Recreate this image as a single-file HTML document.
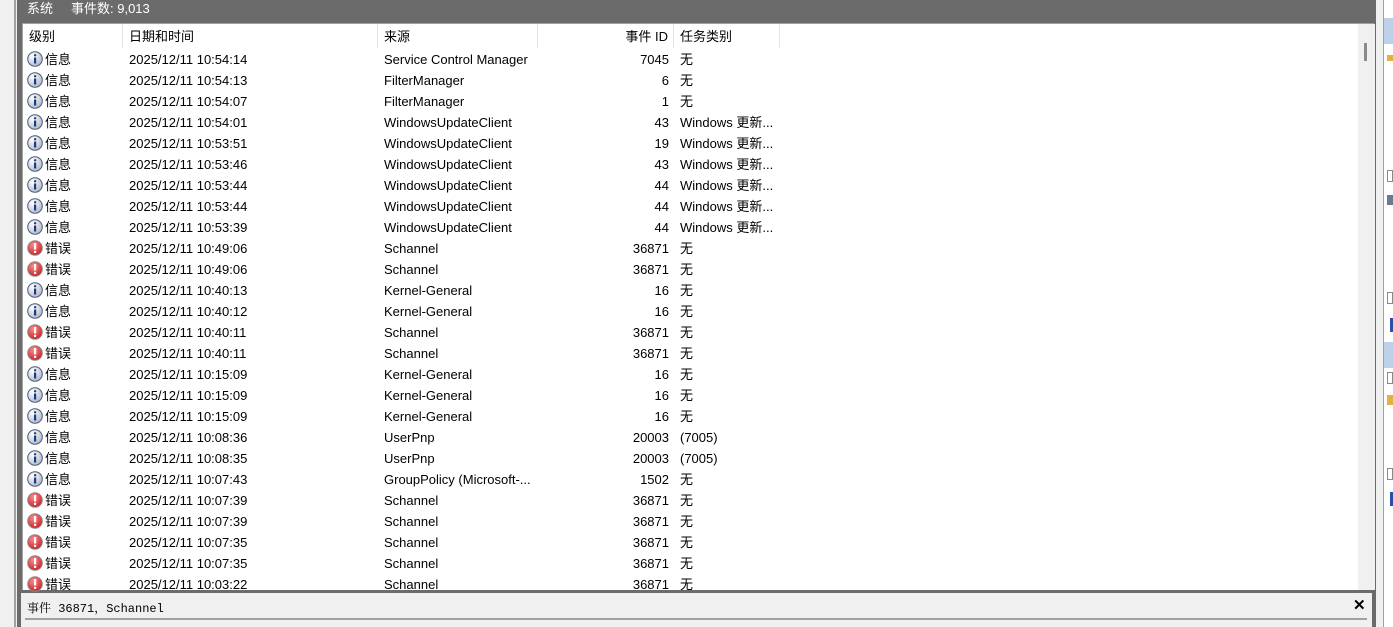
<!DOCTYPE html>
<html><head><meta charset="utf-8"><style>
*{margin:0;padding:0;box-sizing:border-box}
body{width:1393px;height:627px;overflow:hidden;background:#f0f0f0;position:relative;font-family:"Liberation Sans","Noto Sans CJK SC",sans-serif;font-size:13px;color:#000}
.abs{position:absolute}
#top{left:17px;top:0;width:1359px;height:18px;background:#6b6b6b;color:#fff;font-size:13px;line-height:17px}
#frame{left:17px;top:18px;width:1359px;height:575px;background:#6b6b6b}
#list{left:22px;top:23px;width:1352px;height:567px;background:#fff;border-left:1px solid #a0a0a0;border-top:1px solid #a0a0a0}
.hd{position:absolute;top:0;height:24px;line-height:25px;border-right:1px solid #e5e5e5;padding-left:6px}
.row{position:absolute;left:0;height:21px;line-height:22px;width:1336px}
.row span{position:absolute;top:0;white-space:nowrap}
.ic{position:absolute;left:4px;top:2px;width:16px;height:16px}
#sb{left:1358px;top:24px;width:17px;height:566px;background:#f0f0f0}
#det{left:17px;top:593px;width:1359px;height:34px;background:#f0f0f0;border-left:4px solid #6b6b6b;border-right:4px solid #6b6b6b}
#rp{left:1383px;top:0;width:10px;height:627px;background:#fff;border-left:1px solid #a0a0a0}
</style></head><body>
<div class="abs" style="left:0;top:0;width:15px;height:627px;background:#f0f0f0"></div>
<div class="abs" style="left:14px;top:0;width:2px;height:627px;background:#a0a0a0"></div>
<div class="abs" id="top"><span style="position:absolute;left:10px;top:0">系统</span><span style="position:absolute;left:54px;top:0">事件数: 9,013</span></div>
<div class="abs" id="frame"></div>
<div class="abs" id="list">
<div class="hd" style="left:0;width:100px">级别</div>
<div class="hd" style="left:100px;width:255px">日期和时间</div>
<div class="hd" style="left:355px;width:160px">来源</div>
<div class="hd" style="left:515px;width:136px;text-align:right;padding-right:5px">事件 ID</div>
<div class="hd" style="left:651px;width:106px">任务类别</div>
<div id="rows"></div>
</div>
<div class="abs" id="sb"><div class="abs" style="left:6px;top:19px;width:3px;height:18px;background:#8a8a8a"></div></div>
<div class="abs" id="det"><span style="position:absolute;left:6px;top:6px;font-family:'Liberation Mono','Noto Serif CJK SC',monospace;font-size:12px">事件 36871，Schannel</span><span style="position:absolute;left:1332px;top:3px;font-size:15px;font-weight:bold">✕</span><div class="abs" style="left:4px;top:25px;width:1342px;height:2px;background:#a0a0a0"></div></div>
<div class="abs" id="rp">
<div class="abs" style="left:0;top:18px;width:10px;height:26px;background:#bcd0e8"></div>
<div class="abs" style="left:3px;top:55px;width:6px;height:6px;background:#e0b040"></div>
<div class="abs" style="left:3px;top:170px;width:6px;height:12px;border:1px solid #888"></div>
<div class="abs" style="left:3px;top:195px;width:6px;height:10px;background:#6a7a90"></div>
<div class="abs" style="left:3px;top:292px;width:6px;height:12px;border:1px solid #888"></div>
<div class="abs" style="left:0;top:342px;width:10px;height:26px;background:#bcd0e8"></div>
<div class="abs" style="left:6px;top:318px;width:4px;height:14px;background:#2b4fa8"></div>
<div class="abs" style="left:3px;top:372px;width:6px;height:12px;border:1px solid #888"></div>
<div class="abs" style="left:3px;top:395px;width:6px;height:10px;background:#e0b040"></div>
<div class="abs" style="left:3px;top:468px;width:6px;height:12px;border:1px solid #888"></div>
<div class="abs" style="left:6px;top:492px;width:4px;height:14px;background:#2b4fa8"></div>
</div>
<script>
var I='<svg class="ic" viewBox="0 0 16 16"><defs><radialGradient id="gi" cx=".35" cy=".3" r=".8"><stop offset="0" stop-color="#fff"/><stop offset="1" stop-color="#aab4c4"/></radialGradient></defs><circle cx="8" cy="8" r="7.3" fill="url(#gi)" stroke="#4a5a78"/><rect x="7" y="6.5" width="2.2" height="6" fill="#1d3a8a"/><circle cx="8.1" cy="4.3" r="1.2" fill="#1d3a8a"/></svg>';
var E='<svg class="ic" viewBox="0 0 16 16"><defs><radialGradient id="ge" cx=".4" cy=".3" r=".8"><stop offset="0" stop-color="#ff8a8a"/><stop offset="1" stop-color="#c4161c"/></radialGradient></defs><circle cx="8" cy="8" r="7.3" fill="url(#ge)" stroke="#8a8a8a"/><rect x="7" y="3" width="2.2" height="6.5" fill="#fff"/><rect x="7" y="10.8" width="2.2" height="2.2" fill="#fff"/></svg>';
var d=[["i","10:54:14","Service Control Manager","7045","无"],["i","10:54:13","FilterManager","6","无"],["i","10:54:07","FilterManager","1","无"],["i","10:54:01","WindowsUpdateClient","43","Windows 更新..."],["i","10:53:51","WindowsUpdateClient","19","Windows 更新..."],["i","10:53:46","WindowsUpdateClient","43","Windows 更新..."],["i","10:53:44","WindowsUpdateClient","44","Windows 更新..."],["i","10:53:44","WindowsUpdateClient","44","Windows 更新..."],["i","10:53:39","WindowsUpdateClient","44","Windows 更新..."],["e","10:49:06","Schannel","36871","无"],["e","10:49:06","Schannel","36871","无"],["i","10:40:13","Kernel-General","16","无"],["i","10:40:12","Kernel-General","16","无"],["e","10:40:11","Schannel","36871","无"],["e","10:40:11","Schannel","36871","无"],["i","10:15:09","Kernel-General","16","无"],["i","10:15:09","Kernel-General","16","无"],["i","10:15:09","Kernel-General","16","无"],["i","10:08:36","UserPnp","20003","(7005)"],["i","10:08:35","UserPnp","20003","(7005)"],["i","10:07:43","GroupPolicy (Microsoft-...","1502","无"],["e","10:07:39","Schannel","36871","无"],["e","10:07:39","Schannel","36871","无"],["e","10:07:35","Schannel","36871","无"],["e","10:07:35","Schannel","36871","无"],["e","10:03:22","Schannel","36871","无"]];
var h='';d.forEach(function(r,k){h+='<div class="row" style="top:'+(25+k*21)+'px">'+(r[0]=='i'?I:E)+'<span style="left:22px">'+(r[0]=='i'?'信息':'错误')+'</span><span style="left:106px">2025/12/11 '+r[1]+'</span><span style="left:361px">'+r[2]+'</span><span style="right:690px">'+r[3]+'</span><span style="left:657px">'+r[4]+'</span></div>';});
document.getElementById('rows').innerHTML=h;
</script>
</body></html>
